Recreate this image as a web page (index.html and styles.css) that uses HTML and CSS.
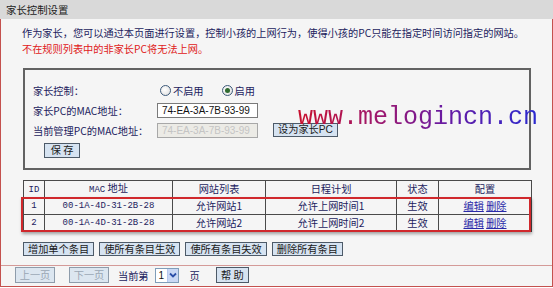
FILE: index.html
```html
<!DOCTYPE html>
<html lang="zh-CN">
<head>
    <meta charset="UTF-8">
    <title>家长控制设置</title>
    <link rel="stylesheet" href="styles.css">
</head>
<body>
    <div class="title-bar">家长控制设置</div>

    <div class="panel">
        <div class="content">
            <p class="intro">作为家长，您可以通过本页面进行设置，控制小孩的上网行为，使得小孩的PC只能在指定时间访问指定的网站。</p>
            <p class="intro warn">不在规则列表中的非家长PC将无法上网。</p>

            <div class="form-box">
                <div class="form-row">
                    <span class="label">家长控制：</span>
                    <span class="radio"><span class="radio-dot"></span>不启用</span>
                    <span class="radio"><span class="radio-dot checked"></span>启用</span>
                </div>
                <div class="form-row">
                    <span class="label">家长PC的MAC地址：</span>
                    <input class="text-input" type="text" value="74-EA-3A-7B-93-99">
                </div>
                <div class="form-row">
                    <span class="label">当前管理PC的MAC地址：</span>
                    <input class="text-input" type="text" value="74-EA-3A-7B-93-99" disabled>
                    <button class="btn btn-set">设为家长PC</button>
                </div>
                <div class="form-row">
                    <button class="btn btn-save">保 存</button>
                </div>
                <div class="watermark">www.melogincn.cn</div>
            </div>

            <div class="rules">
                <table class="rule-table">
                    <tr>
                        <th class="col-id"><span class="mono">ID</span></th>
                        <th class="col-mac"><span class="mono">MAC</span> 地址</th>
                        <th class="col-site">网站列表</th>
                        <th class="col-plan">日程计划</th>
                        <th class="col-state">状态</th>
                        <th class="col-conf">配置</th>
                    </tr>
                    <tr>
                        <td class="mono">1</td>
                        <td class="mono">00-1A-4D-31-2B-28</td>
                        <td>允许网站1</td>
                        <td>允许上网时间1</td>
                        <td>生效</td>
                        <td><a href="#">编辑</a> <a href="#">删除</a></td>
                    </tr>
                    <tr>
                        <td class="mono">2</td>
                        <td class="mono">00-1A-4D-31-2B-28</td>
                        <td>允许网站2</td>
                        <td>允许上网时间2</td>
                        <td>生效</td>
                        <td><a href="#">编辑</a> <a href="#">删除</a></td>
                    </tr>
                </table>
                <div class="highlight"></div>
            </div>

            <div class="actions">
                <button class="btn">增加单个条目</button>
                <button class="btn">使所有条目生效</button>
                <button class="btn">使所有条目失效</button>
                <button class="btn">删除所有条目</button>
            </div>
        </div>

        <div class="divider"></div>

        <div class="pager">
            <button class="btn btn-page" disabled>上一页</button>
            <button class="btn btn-page" disabled>下一页</button>
            <span class="page-label">当前第</span>
            <span class="page-select">
                <span class="page-num">1</span>
                <span class="page-arrow">
                    <svg width="8" height="6" viewBox="0 0 8 6"><path d="M1 1.5 L4 4.5 L7 1.5" fill="none" stroke="#2b4fa8" stroke-width="1.8"/></svg>
                </span>
            </span>
            <span class="page-unit">页</span>
            <button class="btn btn-help">帮 助</button>
        </div>
    </div>
</body>
</html>
```

FILE: styles.css
```css
* {
    margin: 0;
    padding: 0;
    box-sizing: border-box;
}

body {
    width: 553px;
    height: 288px;
    overflow: hidden;
    background: #fff;
    font-family: "Noto Sans CJK SC", "Liberation Sans", sans-serif;
    font-size: 10.2px;
    color: #1c1c5e;
}

.title-bar {
    height: 19px;
    line-height: 19px;
    padding-left: 6px;
    background: #d9d9d9;
    color: #222;
    font-size: 10.4px;
}

.panel {
    height: 268px;
    background: #f5f5f5;
    border: 1px solid #c4514e;
    border-top: none;
}

.content {
    padding: 6px 21px 0 21px;
}

.intro {
    line-height: 16px;
    white-space: nowrap;
}

.warn {
    color: #e02020;
}

.form-box {
    position: relative;
    margin: 11px 0 0 1px;
    width: 508px;
    height: 102px;
    border: 2px solid #626262;
    padding: 10px 0 0 8px;
}

.form-row {
    display: flex;
    align-items: center;
    height: 20px;
}

.label {
    width: 124px;
}

.radio {
    display: flex;
    align-items: center;
    margin-right: 15px;
}

.radio-dot {
    width: 11px;
    height: 11px;
    margin: 0 2px 0 3px;
    border-radius: 50%;
    border: 1px solid #3d5a7a;
    background: radial-gradient(circle at 40% 40%, #fff, #dcdcdc);
    display: flex;
    align-items: center;
    justify-content: center;
}

.radio-dot.checked::after {
    content: '';
    width: 5px;
    height: 5px;
    border-radius: 50%;
    background: #2f6a2f;
}

.text-input {
    width: 101px;
    height: 15px;
    padding: 0 4px;
    border: 1px solid #7a7a7a;
    background: #fff;
    font-family: "Liberation Sans", sans-serif;
    font-size: 10px;
    color: #111;
}

.text-input:disabled {
    background: #ecebe6;
    color: #c4c4c4;
    border-color: #a8a8a8;
}

.btn {
    display: inline-flex;
    align-items: center;
    justify-content: center;
    height: 14px;
    padding: 0 4px;
    border: 1px solid #4d5a68;
    background: #d6e3f1;
    font-family: "Noto Sans CJK SC", sans-serif;
    font-size: 10.2px;
    line-height: 1;
    color: #1a1a1a;
    white-space: nowrap;
}

.btn-set {
    width: 65px;
    margin-left: 15px;
    padding: 0;
    font-family: "Liberation Sans", "Noto Sans CJK SC", sans-serif;
}

.btn-save {
    width: 36px;
    height: 15px;
    margin-left: 11px;
}

/* site watermark laid over the form */
.watermark {
    position: absolute;
    left: 273px;
    top: 35px;
    font-family: "Liberation Mono", monospace;
    font-size: 25px;
    line-height: 25px;
    white-space: nowrap;
    background: linear-gradient(90deg, #c8102e 0%, #9b1870 35%, #6a1aa0 60%, #2a2ad0 100%);
    -webkit-background-clip: text;
    background-clip: text;
    color: transparent;
    pointer-events: none;
}

.rules {
    position: relative;
    margin: 10px 0 0 1px;
    width: 508px;
}

.rule-table {
    width: 508px;
    border-collapse: collapse;
    table-layout: fixed;
}

.rule-table th,
.rule-table td {
    height: 17px;
    padding: 0;
    border: 1px solid #4a4a4a;
    text-align: center;
    font-weight: normal;
    line-height: 14px;
    white-space: nowrap;
}

.rule-table .mono {
    font-family: "Liberation Mono", monospace;
    font-size: 9px;
}

.col-id { width: 21px; }
.col-mac { width: 128px; }
.col-site { width: 93px; }
.col-plan { width: 131px; }
.col-state { width: 42px; }
.col-conf { width: 93px; }

.rule-table a {
    color: #2a2aa8;
    text-decoration: underline;
}

.highlight {
    position: absolute;
    left: -2px;
    top: 17px;
    width: 510px;
    height: 35px;
    border: 2px solid #d0282c;
    box-shadow: 1px 2px 3px rgba(0, 0, 0, 0.35);
    pointer-events: none;
}

.actions {
    display: flex;
    gap: 5px;
    margin: 10px 0 0 1px;
}

.divider {
    height: 1px;
    margin-top: 9px;
    background: #d49a98;
}

.pager {
    display: flex;
    align-items: center;
    height: 18px;
    padding-left: 14px;
}

.btn-page {
    width: 40px;
    height: 16px;
    margin-right: 14px;
    color: #9aa6b4;
    border-color: #8e9cab;
    background: #dce6f0;
}

.page-label {
    margin-left: -5px;
}

.page-select {
    display: flex;
    align-items: center;
    width: 24px;
    height: 15px;
    margin-left: 6px;
    border: 1px solid #7f9db9;
    background: #fff;
}

.page-num {
    flex: 1;
    padding-left: 3px;
    font-family: "Liberation Sans", sans-serif;
    font-size: 10px;
    color: #111;
}

.page-arrow {
    width: 11px;
    height: 13px;
    display: flex;
    align-items: center;
    justify-content: center;
    background: #c9d8f5;
    border-left: 1px solid #b6c8ee;
}

.page-unit {
    margin-left: 11px;
}

.btn-help {
    width: 33px;
    height: 16px;
    margin-left: 16px;
}
```
